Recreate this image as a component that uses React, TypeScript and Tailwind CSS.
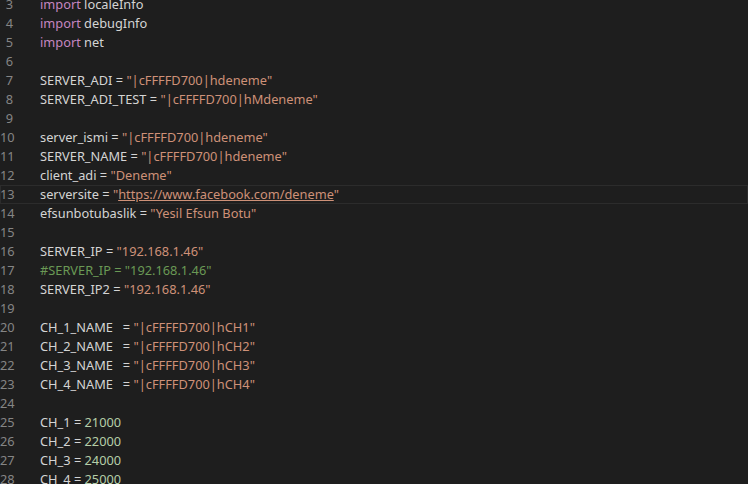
import React from "react";

type Seg = [string, string];
const K = "text-[#c586c0]", T = "text-[#d4d4d4]", S = "text-[#ce9178]", N = "text-[#b5cea8]", C = "text-[#6a9955]";
const str = (s: string): Seg => [S, s];
const lines: { n: number; segs: Seg[]; hl?: boolean }[] = [
  { n: 3, segs: [[K, "import"], [T, " localeInfo"]] },
  { n: 4, segs: [[K, "import"], [T, " debugInfo"]] },
  { n: 5, segs: [[K, "import"], [T, " net"]] },
  { n: 6, segs: [] },
  { n: 7, segs: [[T, "SERVER_ADI = "], str('"|cFFFFD700|hdeneme"')] },
  { n: 8, segs: [[T, "SERVER_ADI_TEST = "], str('"|cFFFFD700|hMdeneme"')] },
  { n: 9, segs: [] },
  { n: 10, segs: [[T, "server_ismi = "], str('"|cFFFFD700|hdeneme"')] },
  { n: 11, segs: [[T, "SERVER_NAME = "], str('"|cFFFFD700|hdeneme"')] },
  { n: 12, segs: [[T, "client_adi = "], str('"Deneme"')] },
  { n: 13, segs: [[T, "serversite = "], str('"'), ["text-[#ce9178] underline", "https://www.facebook.com/deneme"], str('"')], hl: true },
  { n: 14, segs: [[T, "efsunbotubaslik = "], str('"Yesil Efsun Botu"')] },
  { n: 15, segs: [] },
  { n: 16, segs: [[T, "SERVER_IP = "], str('"192.168.1.46"')] },
  { n: 17, segs: [[C, "#SERVER_IP = \"192.168.1.46\""]] },
  { n: 18, segs: [[T, "SERVER_IP2 = "], str('"192.168.1.46"')] },
  { n: 19, segs: [] },
  { n: 20, segs: [[T, "CH_1_NAME   = "], str('"|cFFFFD700|hCH1"')] },
  { n: 21, segs: [[T, "CH_2_NAME   = "], str('"|cFFFFD700|hCH2"')] },
  { n: 22, segs: [[T, "CH_3_NAME   = "], str('"|cFFFFD700|hCH3"')] },
  { n: 23, segs: [[T, "CH_4_NAME   = "], str('"|cFFFFD700|hCH4"')] },
  { n: 24, segs: [] },
  { n: 25, segs: [[T, "CH_1 = "], [N, "21000"]] },
  { n: 26, segs: [[T, "CH_2 = "], [N, "22000"]] },
  { n: 27, segs: [[T, "CH_3 = "], [N, "24000"]] },
  { n: 28, segs: [[T, "CH_4 = "], [N, "25000"]] },
];

export default function App() {
  return (
    <div className="w-[748px] h-[484px] overflow-hidden bg-[#1e1e1e] font-['Liberation_Mono'] text-[12.8px]">
      <div className="-mt-[5px]">
        {lines.map((l) => (
          <div key={l.n} className={`flex h-[19px] leading-[19px] whitespace-pre ${l.hl ? "shadow-[inset_0_0_0_1px_#2c2c2c]" : ""}`}>
            <div className="w-[13px] text-right text-[#858585] shrink-0">{l.n}</div>
            <div className="pl-[27px]">
              {l.segs.map((s, i) => (
                <span key={i} className={s[0]}>{s[1]}</span>
              ))}
            </div>
          </div>
        ))}
      </div>
    </div>
  );
}
